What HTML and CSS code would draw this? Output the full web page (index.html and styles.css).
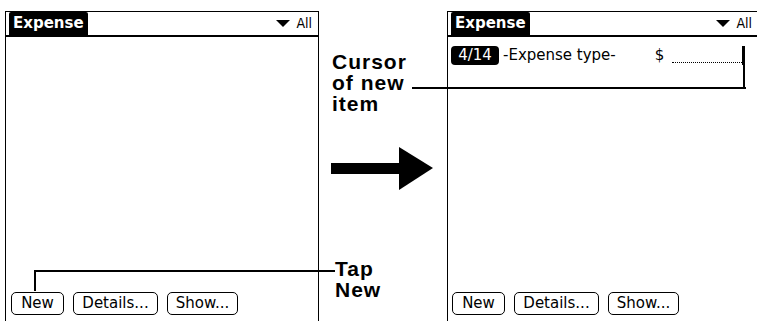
FILE: index.html
```html
<!DOCTYPE html>
<html lang="en">
<head>
    <meta charset="UTF-8">
    <title>Expense - new item</title>
    <link rel="stylesheet" href="styles.css">
</head>
<body>
    <div id="page">
        <div class="screen">
            <div class="titlebar">
                <span class="tab">Expense</span>
                <span class="category"><span class="tri"></span>All</span>
            </div>
            <div class="list"></div>
            <div class="buttons">
                <span class="btn btn-new">New</span>
                <span class="btn btn-details">Details...</span>
                <span class="btn btn-show">Show...</span>
            </div>
        </div>

        <div class="middle">
            <div class="label label-cursor">Cursor<br>of new<br>item</div>
            <svg class="arrow" width="104" height="44" viewBox="0 0 104 44">
                <rect x="0" y="16" width="70" height="11" fill="#000"/>
                <polygon points="68,0 102,21 68,43" fill="#000"/>
            </svg>
            <div class="label label-tap">Tap<br>New</div>
        </div>

        <div class="screen screen-right">
            <div class="titlebar">
                <span class="tab">Expense</span>
                <span class="category"><span class="tri"></span>All</span>
            </div>
            <div class="list">
                <div class="item">
                    <span class="date">4/14</span>
                    <span class="type">-Expense type-</span>
                    <span class="dollar">$</span>
                    <span class="amount"></span>
                    <span class="cursor"></span>
                </div>
            </div>
            <div class="buttons">
                <span class="btn btn-new">New</span>
                <span class="btn btn-details">Details...</span>
                <span class="btn btn-show">Show...</span>
            </div>
        </div>

        <!-- callout leader lines -->
        <div class="lead lead-tap-v"></div>
        <div class="lead lead-tap-h"></div>
        <div class="lead lead-cur-h"></div>
        <div class="lead lead-cur-v"></div>
    </div>
</body>
</html>
```

FILE: styles.css
```css
*{
    margin:0;
    padding:0;
    box-sizing: border-box;
}
body{
    background: #ffffff;
    width: 757px;
    height: 321px;
    overflow: hidden;
    color: #000000;
    font-family: "DejaVu Sans", sans-serif;
}
#page{
    position: relative;
    display: flex;
    height: 321px;
    padding: 11px 0 0 5px;
}
.screen{
    width: 314px;
    height: 310px;
    flex-shrink: 0;
    border: 1px solid #000000;
    border-bottom: none;
    display: flex;
    flex-direction: column;
}
.screen-right{
    width: 310px;
    border-right: none;
}
.titlebar{
    display: flex;
    align-items: flex-start;
    height: 25px;
    border-bottom: 2px solid #000000;
    padding-left: 3px;
}
.tab{
    background: #000000;
    color: #ffffff;
    font-weight: bold;
    font-size: 15px;
    line-height: 23px;
    height: 23px;
    padding: 0 4px 0 4px;
    border-radius: 2px 2px 0 0;
}
.category{
    margin-left: auto;
    margin-right: 6px;
    font-family: "DejaVu Sans Condensed", "DejaVu Sans", sans-serif;
    font-size: 14px;
    line-height: 23px;
    display: flex;
    align-items: center;
}
.tri{
    width: 0;
    height: 0;
    border-left: 7px solid transparent;
    border-right: 7px solid transparent;
    border-top: 7px solid #000000;
    margin-right: 6px;
}
.screen-right .category{
    margin-right: 5px;
}
.list{
    flex: 1;
}
.item{
    display: flex;
    align-items: center;
    height: 22px;
    margin-top: 7px;
    padding-left: 3px;
    font-size: 15px;
}
.date{
    background: #000000;
    color: #ffffff;
    border-radius: 4px;
    width: 48px;
    height: 19px;
    line-height: 19px;
    text-align: center;
}
.type{
    margin-left: 4px;
}
.dollar{
    margin-left: 39px;
}
.amount{
    width: 70px;
    height: 16px;
    margin-left: 8px;
    border-bottom: 1px dotted #000000;
}
.cursor{
    width: 3px;
    height: 19px;
    background: #000000;
}
.buttons{
    display: flex;
    gap: 9px;
    padding: 0 0 6px 5px;
}
.btn{
    height: 23px;
    line-height: 21px;
    border: 1px solid #000000;
    border-radius: 5px;
    text-align: center;
    font-size: 15px;
}
.btn-new{
    width: 53px;
}
.btn-details{
    width: 85px;
}
.btn-show{
    width: 71px;
}
.screen-right .buttons{
    padding-left: 4px;
}
.middle{
    width: 128px;
    flex-shrink: 0;
    display: flex;
    flex-direction: column;
    padding-left: 13px;
}
.label{
    font-family: "Liberation Sans", Arial, sans-serif;
    font-weight: bold;
    font-size: 21px;
    line-height: 21px;
    letter-spacing: 1px;
}
.label-cursor{
    margin-top: 40px;
}
.arrow{
    display: block;
    margin-top: 33px;
    margin-left: -1px;
}
.label-tap{
    margin-top: auto;
    margin-bottom: 21px;
    margin-left: 3px;
}
.lead{
    position: absolute;
    background: #000000;
}
.lead-tap-v{
    left: 34px;
    top: 270px;
    width: 2px;
    height: 21px;
}
.lead-tap-h{
    left: 34px;
    top: 270px;
    width: 301px;
    height: 2px;
}
.lead-cur-h{
    left: 412px;
    top: 87px;
    width: 334px;
    height: 2px;
}
.lead-cur-v{
    left: 743px;
    top: 62px;
    width: 2px;
    height: 27px;
}
```
